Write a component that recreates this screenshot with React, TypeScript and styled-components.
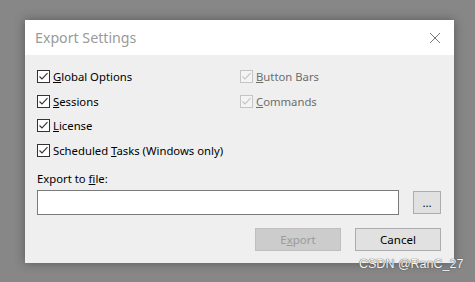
import * as React from "react";
import styled, { createGlobalStyle } from "styled-components";

const GlobalStyle = createGlobalStyle`
  html, body {
    margin: 0;
    padding: 0;
    background: #878787;
  }
`;

const Screen = styled.div`
  position: relative;
  width: 475px;
  height: 282px;
  padding: 20px 0 0 25px;
  box-sizing: border-box;
  font-family: "Noto Sans", "Open Sans", sans-serif;
`;

const Dialog = styled.div`
  width: 429px;
  height: 243px;
  background: #efefef;
  box-shadow: 0 0 10px rgba(0, 0, 0, 0.35);
  display: flex;
  flex-direction: column;
`;

const TitleBar = styled.div`
  height: 35px;
  background: #ffffff;
  display: flex;
  align-items: center;
  justify-content: space-between;
  padding: 0 13px 0 10px;
`;

const Title = styled.span`
  font-size: 14.2px;
  color: #9a9a9a;
`;

const Body = styled.div`
  padding: 9px 13px 0 12px;
  display: flex;
  flex-direction: column;
  font-size: 11.3px;
  color: #000;
`;

const OptionGrid = styled.div`
  display: grid;
  grid-template-columns: 203px 1fr;
  grid-auto-rows: 24.7px;
`;

const Option = styled.label<{ disabled?: boolean }>`
  display: flex;
  align-items: center;
  gap: 3px;
  color: ${(p) => (p.disabled ? "#6d6d6d" : "#000")};
  white-space: nowrap;
`;

const FileLabel = styled.div`
  margin-top: 7px;
  height: 17px;
  line-height: 17px;
`;

const FileRow = styled.div`
  display: flex;
  align-items: center;
  gap: 14px;
  margin-top: 3px;
`;

const FileInput = styled.div`
  width: 362px;
  height: 25px;
  box-sizing: border-box;
  background: #fff;
  border: 1px solid #7a7a7a;
`;

const Button = styled.div<{ disabled?: boolean; w: number }>`
  width: ${(p) => p.w}px;
  height: 23px;
  box-sizing: border-box;
  display: flex;
  align-items: center;
  justify-content: center;
  background: ${(p) => (p.disabled ? "#cccccc" : "#e1e1e1")};
  border: 1px solid ${(p) => (p.disabled ? "#bfbfbf" : "#adadad")};
  color: ${(p) => (p.disabled ? "#9a9a9a" : "#000")};
  font-size: 11.5px;
`;

const ButtonRow = styled.div`
  display: flex;
  justify-content: flex-end;
  gap: 14px;
  margin-top: 13px;
`;

const Watermark = styled.div`
  position: absolute;
  left: 359px;
  top: 257px;
  font-size: 12.5px;
  color: #f4f4f4;
  font-family: "Liberation Sans", sans-serif;
  text-shadow: 0 0 1px #555, 0 0 1px #555;
`;

const Check = ({ disabled }: { disabled?: boolean }) => {
  const c = disabled ? "#c4c4c4" : "#333";
  return (
    <svg width="13" height="13" viewBox="0 0 13 13">
      <rect x="0.5" y="0.5" width="12" height="12" fill={disabled ? "#f4f4f4" : "#fff"} stroke={c} />
      <path d="M2.5 6.5 L5 9 L10.5 3.2" fill="none" stroke={c} strokeWidth="1.1" />
    </svg>
  );
};

const Close = () => (
  <svg width="12" height="12" viewBox="0 0 12 12">
    <path d="M1 1 L11 11 M11 1 L1 11" stroke="#777" strokeWidth="1" />
  </svg>
);

export default function App() {
  return (
    <>
      <GlobalStyle />
      <Screen>
        <Dialog>
          <TitleBar>
            <Title>Export Settings</Title>
            <Close />
          </TitleBar>
          <Body>
            <OptionGrid>
              <Option>
                <Check />
                <span><u>G</u>lobal Options</span>
              </Option>
              <Option disabled>
                <Check disabled />
                <span><u>B</u>utton Bars</span>
              </Option>
              <Option>
                <Check />
                <span><u>S</u>essions</span>
              </Option>
              <Option disabled>
                <Check disabled />
                <span><u>C</u>ommands</span>
              </Option>
              <Option>
                <Check />
                <span><u>L</u>icense</span>
              </Option>
              <span />
              <Option>
                <Check />
                <span>Scheduled <u>T</u>asks (Windows only)</span>
              </Option>
            </OptionGrid>
            <FileLabel>
              Export to <u>f</u>ile:
            </FileLabel>
            <FileRow>
              <FileInput />
              <Button w={28}>...</Button>
            </FileRow>
            <ButtonRow>
              <Button w={86} disabled>
                <span>E<u>x</u>port</span>
              </Button>
              <Button w={86}>Cancel</Button>
            </ButtonRow>
          </Body>
        </Dialog>
        <Watermark>CSDN @RanC_27</Watermark>
      </Screen>
    </>
  );
}
